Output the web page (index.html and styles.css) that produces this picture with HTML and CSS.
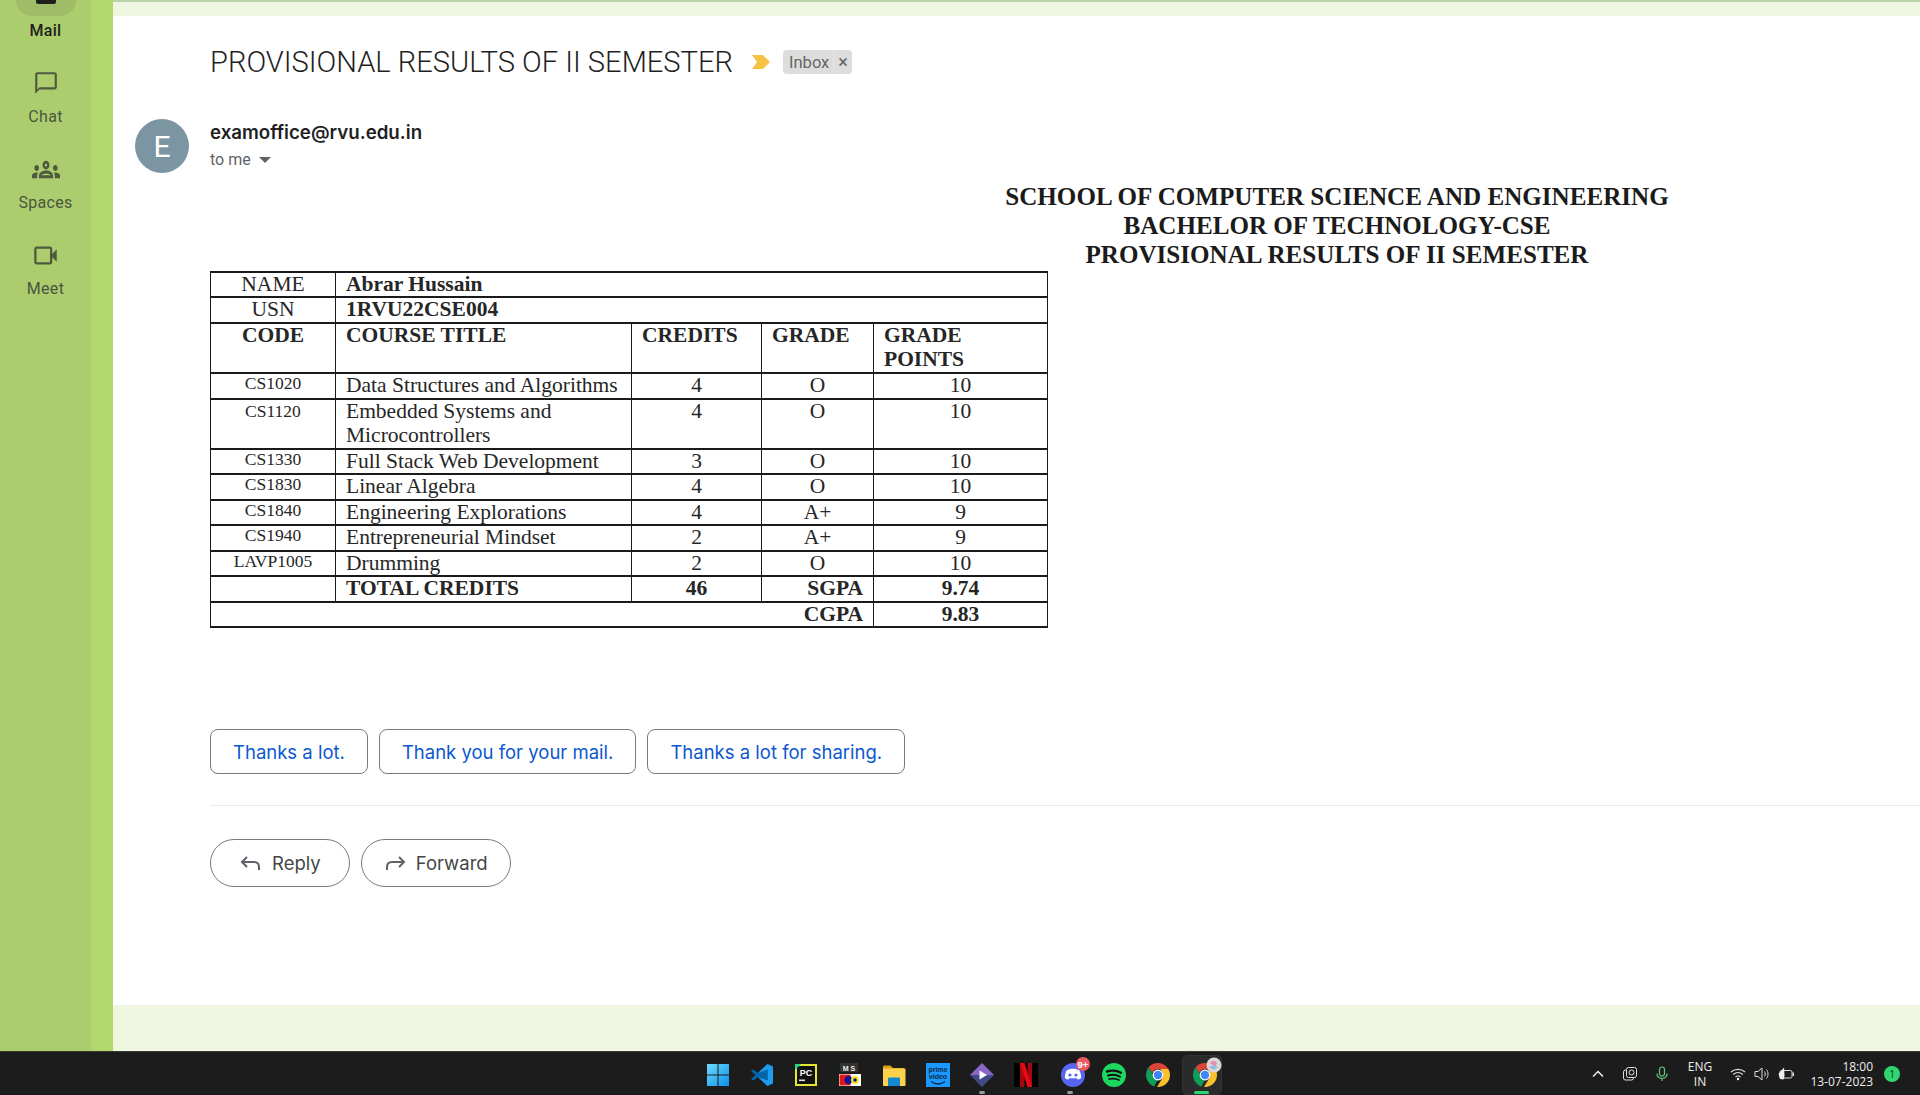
FILE: index.html
```html
<!DOCTYPE html>
<html lang="en">
<head>
<meta charset="utf-8">
<title>Gmail - Provisional results</title>
<link rel="stylesheet" href="styles.css">
</head>
<body>
<div class="screen">
  <div class="desktop">
    <nav class="rail">
      <div class="rail-item is-active">
        <div class="rail-icon"><svg viewBox="0 0 24 24" width="24" height="24"><path fill="#1f1f1f" d="M20 4H4c-1.1 0-2 .9-2 2v12c0 1.1.9 2 2 2h16c1.1 0 2-.9 2-2V6c0-1.1-.9-2-2-2z"/></svg></div>
        <div class="rail-label">Mail</div>
      </div>
      <div class="rail-item">
        <div class="rail-icon"><svg viewBox="0 0 24 24" width="26" height="26"><path fill="#4d5a3e" d="M20 2H4c-1.1 0-2 .9-2 2v18l4-4h14c1.1 0 2-.9 2-2V4c0-1.1-.9-2-2-2zm0 14H6l-2 2V4h16v12z"/></svg></div>
        <div class="rail-label">Chat</div>
      </div>
      <div class="rail-item">
        <div class="rail-icon"><svg viewBox="0 5.500 24 13" width="28" height="19" preserveAspectRatio="none"><path fill="#4d5a3e" d="M4 13c1.1 0 2-.9 2-2s-.9-2-2-2-2 .9-2 2 .9 2 2 2zm1.13 1.1c-.37-.06-.74-.1-1.13-.1-.99 0-1.93.21-2.78.58C.48 14.9 0 15.62 0 16.43V18h4.5v-1.61c0-.83.23-1.61.63-2.29zM20 13c1.1 0 2-.9 2-2s-.9-2-2-2-2 .9-2 2 .9 2 2 2zm4 3.43c0-.81-.48-1.53-1.22-1.85-.85-.37-1.79-.58-2.78-.58-.39 0-.76.04-1.13.1.4.68.63 1.46.63 2.29V18H24v-1.57zm-7.76-2.78c-1.17-.52-2.61-.9-4.24-.9-1.63 0-3.07.39-4.24.9C6.68 14.13 6 15.21 6 16.39V18h12v-1.61c0-1.18-.68-2.26-1.76-2.74zM8.07 16c.09-.23.13-.39.91-.69.97-.38 1.99-.56 3.02-.56s2.05.18 3.02.56c.77.3.81.46.91.69H8.07zM12 8c.55 0 1 .45 1 1s-.45 1-1 1-1-.45-1-1 .45-1 1-1m0-2c-1.66 0-3 1.34-3 3s1.34 3 3 3 3-1.34 3-3-1.34-3-3-3z"/></svg></div>
        <div class="rail-label">Spaces</div>
      </div>
      <div class="rail-item">
        <div class="rail-icon"><svg viewBox="0 0 24 24" width="27" height="27"><path fill="#4d5a3e" d="M18 10.48V6c0-1.1-.9-2-2-2H4c-1.1 0-2 .9-2 2v12c0 1.1.9 2 2 2h12c1.1 0 2-.9 2-2v-4.48l4 3.98v-11l-4 3.98zm-2-.79V18H4V6h12v3.69z"/></svg></div>
        <div class="rail-label">Meet</div>
      </div>
    </nav>
    <div class="gutter"></div>
    <div class="content">
      <div class="band-top"></div>
      <main class="mail">
        <div class="subject">
          <h1 class="subject-title">PROVISIONAL RESULTS OF II SEMESTER</h1>
          <svg class="marker" viewBox="0 0 18 14" width="18" height="14"><path fill="#f6c344" d="M0 0h11l7 7-7 7H0l5-7z"/></svg>
          <span class="chip"><span class="chip-text">Inbox</span><span class="chip-close">×</span></span>
        </div>
        <div class="sender">
          <div class="avatar">E</div>
          <div class="sender-meta">
            <div class="sender-addr">examoffice@rvu.edu.in</div>
            <div class="sender-to">to me <span class="caret"></span></div>
          </div>
        </div>
        <div class="letterhead">
          <div>SCHOOL OF COMPUTER SCIENCE AND ENGINEERING</div>
          <div>BACHELOR OF TECHNOLOGY-CSE</div>
          <div>PROVISIONAL RESULTS OF II SEMESTER</div>
        </div>
        <table class="results">
          <colgroup>
            <col class="c-code"><col class="c-title"><col class="c-credits"><col class="c-grade"><col class="c-points">
          </colgroup>
          <tr><td class="ctr">NAME</td><td colspan="4" class="b">Abrar Hussain</td></tr>
          <tr class="r26"><td class="ctr">USN</td><td colspan="4" class="b">1RVU22CSE004</td></tr>
          <tr class="wide"><td class="ctr b">CODE</td><td class="b">COURSE TITLE</td><td class="b">CREDITS</td><td class="b">GRADE</td><td class="b">GRADE POINTS</td></tr>
          <tr class="r26"><td class="ctr code">CS1020</td><td>Data Structures and Algorithms</td><td class="ctr">4</td><td class="ctr">O</td><td class="ctr">10</td></tr>
          <tr class="wide"><td class="ctr code">CS1120</td><td>Embedded Systems and Microcontrollers</td><td class="ctr">4</td><td class="ctr">O</td><td class="ctr">10</td></tr>
          <tr><td class="ctr code">CS1330</td><td>Full Stack Web Development</td><td class="ctr">3</td><td class="ctr">O</td><td class="ctr">10</td></tr>
          <tr class="r26"><td class="ctr code">CS1830</td><td>Linear Algebra</td><td class="ctr">4</td><td class="ctr">O</td><td class="ctr">10</td></tr>
          <tr><td class="ctr code">CS1840</td><td>Engineering Explorations</td><td class="ctr">4</td><td class="ctr">A+</td><td class="ctr">9</td></tr>
          <tr class="r26"><td class="ctr code">CS1940</td><td>Entrepreneurial Mindset</td><td class="ctr">2</td><td class="ctr">A+</td><td class="ctr">9</td></tr>
          <tr><td class="ctr code">LAVP1005</td><td>Drumming</td><td class="ctr">2</td><td class="ctr">O</td><td class="ctr">10</td></tr>
          <tr class="r26"><td></td><td class="b">TOTAL CREDITS</td><td class="ctr b">46</td><td class="end b">SGPA</td><td class="ctr b">9.74</td></tr>
          <tr><td colspan="4" class="end b">CGPA</td><td class="ctr b">9.83</td></tr>
        </table>
        <div class="smart-replies">
          <button class="smart">Thanks a lot.</button>
          <button class="smart">Thank you for your mail.</button>
          <button class="smart">Thanks a lot for sharing.</button>
        </div>
        <div class="divider"></div>
        <div class="actions">
          <button class="action action-reply"><svg viewBox="0 0 24 24" width="24" height="24"><path fill="none" stroke="#5f6368" stroke-width="2" d="M8 6 3 11l5 5M3 11h12c3 0 5 2 5 5v3"/></svg>Reply</button>
          <button class="action action-forward"><svg viewBox="0 0 24 24" width="24" height="24"><path fill="none" stroke="#5f6368" stroke-width="2" d="m16 6 5 5-5 5M21 11H9c-3 0-5 2-5 5v3"/></svg>Forward</button>
        </div>
      </main>
      <div class="band-bottom"></div>
    </div>
  </div>
  <footer class="taskbar">
    <div></div>
    <div class="apps">
      <div class="app"><svg viewBox="0 0 24 24" width="24" height="24"><defs><linearGradient id="w" x1="0" y1="0" x2="1" y2="1"><stop offset="0" stop-color="#6fdcff"/><stop offset="1" stop-color="#0a8fe8"/></linearGradient></defs><path fill="url(#w)" d="M1 1h10.500v10.500H1zM12.500 1H23v10.500H12.500zM1 12.500h10.500V23H1zM12.500 12.500H23V23H12.500z"/></svg></div>
      <div class="app"><svg viewBox="0 0 24 24" width="24" height="24"><path fill="#0065a9" d="M17.500 1 8 10 3.500 6.500 1 8l4.500 4L1 16l2.500 1.500L8 14l9.500 9V1z"/><path fill="#1f9cf0" d="M17.500 1 23 3.500v17L17.500 23 8 14l9.500 3.500v-11L8 10z"/></svg></div>
      <div class="app"><svg viewBox="0 0 24 24" width="24" height="24"><rect x="1" y="1" width="22" height="22" fill="#e8e337"/><rect x="3" y="3" width="18" height="18" fill="#111"/><path fill="#21d789" d="M1 1h6l-6 6z"/><text x="12" y="13" class="ic-pc">PC</text><rect x="5" y="16.500" width="6" height="1.600" fill="#ddd"/></svg></div>
      <div class="app"><svg viewBox="0 0 24 24" width="24" height="24"><rect x="2" y="0" width="18" height="9" fill="#333"/><text x="11" y="8" class="ic-ms">M S</text><rect x="1" y="11" width="22" height="12" fill="#fff"/><rect x="1.500" y="11.500" width="11" height="11" fill="#e0161c"/><circle cx="10.500" cy="17" r="4" fill="#141496"/><circle cx="17" cy="17" r="4" fill="#f4ea1d"/><circle cx="17" cy="17" r="1.800" fill="#141496"/></svg></div>
      <div class="app"><svg viewBox="0 0 24 24" width="24" height="24"><path fill="#d9a013" d="M1 4c0-1 .6-1.500 1.500-1.500h6L11 5h11v3H1z"/><path fill="#fbd24c" d="M1 5.500h21.500c.6 0 1 .4 1 1V22c0 .6-.4 1-1 1H2c-.6 0-1-.4-1-1z"/><path fill="#1487cf" d="M6 16c0-.8.5-1.500 1.500-1.500h9c1 0 1.500.7 1.500 1.500v7H6z"/></svg></div>
      <div class="app"><svg viewBox="0 0 24 24" width="24" height="24"><rect width="24" height="24" fill="#1a98ff"/><text x="12" y="8.500" class="ic-prime">prime</text><text x="12" y="15.500" class="ic-prime">video</text><path fill="none" stroke="#0d2a44" stroke-width="1.300" d="M5 18.500c4.500 3 10 3 14 0"/></svg></div>
      <div class="app has-dot"><svg viewBox="0 0 24 24" width="24" height="24"><path fill="#8a66c6" d="M12 0 24 12H0z"/><path fill="#3f4a86" d="M0 12h24L12 24z"/><path fill="#fff" d="M9.500 7.500 17 12l-7.500 4.500z"/></svg></div>
      <div class="app"><svg viewBox="0 0 24 24" width="24" height="24"><rect width="24" height="24" fill="#000"/><path fill="#a50710" d="M6 0h4.500v24H6zM13.500 0H18v24h-4.500z"/><path fill="#e50914" d="M6 0h4.500L18 24h-4.500z"/></svg></div>
      <div class="app has-dot"><svg class="ic-over" viewBox="0 0 30 30" width="30" height="30"><circle cx="12" cy="18" r="12" fill="#5865f2"/><path fill="#fff" d="M5.500 13.500c4-2.200 9-2.200 13 0 1.200 2.500 1.800 5 1.700 7.500-1 .9-2.200 1.400-3.300 1.700l-1-1.500H8.100l-1 1.500C6 22.400 4.800 21.900 3.800 21c0-2.500.6-5 1.700-7.500z"/><circle cx="9" cy="18" r="1.600" fill="#5865f2"/><circle cx="15" cy="18" r="1.600" fill="#5865f2"/><circle cx="22" cy="7" r="7" fill="#ec5a5f"/><text x="22" y="10.500" class="ic-badge">9+</text></svg></div>
      <div class="app"><svg viewBox="0 0 24 24" width="24" height="24"><circle cx="12" cy="12" r="12" fill="#1ed760"/><path fill="none" stroke="#111" stroke-linecap="round" stroke-width="2.400" d="M5 8.500c4.500-1.300 10-1 14 1.200"/><path fill="none" stroke="#111" stroke-linecap="round" stroke-width="2" d="M6 12.500c4-1 8.500-.8 12 1.200"/><path fill="none" stroke="#111" stroke-linecap="round" stroke-width="1.700" d="M7 16c3.500-.8 7-.6 10 1"/></svg></div>
      <div class="app"><svg viewBox="0 0 24 24" width="24" height="24"><path fill="#db4437" d="M12 0c4.400 0 8.300 2.400 10.400 6H12c-2.700 0-5 1.700-5.700 4.200L2.600 4.200C4.800 1.600 8.200 0 12 0z"/><path fill="#0f9d58" d="M2.600 4.200 7.800 13.200c1 1.700 2.700 2.800 4.200 2.800l-3.700 7.400C3.500 21.800 0 17.300 0 12c0-2.900 1-5.700 2.600-7.800z"/><path fill="#fbc02d" d="M22.400 6C23.400 7.800 24 9.800 24 12c0 6.600-5.400 12-12 12h-1l5.300-8.800c.5-.9.700-2 .7-3.200 0-2.300-1-4.400-3-6z"/><circle cx="12" cy="12" r="5.400" fill="#fff"/><circle cx="12" cy="12" r="4.200" fill="#4285f4"/></svg></div>
      <div class="app is-running"><svg class="ic-over" viewBox="0 0 30 30" width="30" height="30"><g transform="translate(0 6)"><path fill="#db4437" d="M12 0c4.400 0 8.300 2.400 10.400 6H12c-2.700 0-5 1.700-5.700 4.200L2.600 4.200C4.800 1.600 8.200 0 12 0z"/><path fill="#0f9d58" d="M2.600 4.200 7.800 13.200c1 1.700 2.700 2.800 4.200 2.800l-3.700 7.400C3.500 21.800 0 17.300 0 12c0-2.900 1-5.700 2.600-7.800z"/><path fill="#fbc02d" d="M22.400 6C23.400 7.800 24 9.800 24 12c0 6.600-5.400 12-12 12h-1l5.300-8.800c.5-.9.700-2 .7-3.200 0-2.300-1-4.400-3-6z"/><circle cx="12" cy="12" r="5.400" fill="#fff"/><circle cx="12" cy="12" r="4.200" fill="#4285f4"/></g><circle cx="21" cy="8" r="7.500" fill="#d9d9d9"/><path fill="#e88fb0" d="M17 6c2-3 5-3 7 0l-2 4z"/><path fill="#8fbfe0" d="M16 10c2-2 6-2 9 0l-4 3z"/></svg></div>
    </div>
    <div class="tray">
      <svg class="tray-ic" viewBox="0 0 16 16" width="16" height="16"><path fill="none" stroke="#eee" stroke-width="1.500" d="m3 10.500 5-5 5 5"/></svg>
      <svg class="tray-ic" viewBox="0 0 16 16" width="16" height="16"><rect x="1.500" y="4" width="10" height="10" rx="2" fill="none" stroke="#ddd"/><rect x="4.500" y="1.500" width="10" height="10" rx="2" fill="#1c1c1c" stroke="#ddd"/><circle cx="9.500" cy="6.500" r="2.500" fill="none" stroke="#ddd"/></svg>
      <svg class="tray-ic" viewBox="0 0 16 16" width="16" height="16"><rect x="5.500" y="1" width="5" height="9" rx="2.500" fill="none" stroke="#5fc87a" stroke-width="1.200"/><path fill="none" stroke="#5fc87a" stroke-width="1.200" d="M3 7.500c0 3 2 4.800 5 4.800s5-1.800 5-4.800M8 12.300V15"/></svg>
      <div class="lang"><div>ENG</div><div>IN</div></div>
      <svg class="tray-ic tight" viewBox="0 0 16 16" width="16" height="16"><path fill="none" stroke="#ddd" stroke-width="1.100" d="M1 6c4-3.500 10-3.500 14 0M3.200 8.500c3-2.500 6.600-2.500 9.600 0M5.500 11c1.500-1.200 3.500-1.200 5 0"/><circle cx="8" cy="13" r="1.200" fill="#fff"/></svg>
      <svg class="tray-ic tight" viewBox="0 0 16 16" width="16" height="16"><path fill="none" stroke="#ddd" stroke-width="1" d="M1 5.500h3L8 2v12L4 10.500H1zM10.500 5.500c1 1.500 1 3.500 0 5M12.500 3.500c2 2.500 2 6.500 0 9"/></svg>
      <svg class="tray-ic batt" viewBox="0 0 18 16" width="18" height="16"><rect x="3" y="4.500" width="12" height="7.500" rx="1.500" fill="none" stroke="#ddd"/><rect x="15.500" y="6.500" width="1.500" height="3.500" fill="#ddd"/><path fill="#eee" d="M7 1.500 1.500 8 3 13l3.500.5 1-4z"/></svg>
      <div class="clock"><div>18:00</div><div>13-07-2023</div></div>
      <div class="notify">1</div>
    </div>
  </footer>
</div>
</body>
</html>
```

FILE: styles.css
```css
* { box-sizing: border-box; }
html, body { margin: 0; height: 100%; }
body { font-family: "Roboto", "Liberation Sans", sans-serif; background: #fff; overflow: hidden; }
button { font: inherit; background: #fff; cursor: pointer; }

.screen { display: flex; flex-direction: column; width: 1920px; height: 1095px; overflow: hidden; }
.desktop { flex: 1; display: flex; min-height: 0; }

/* left rail */
.rail { width: 91px; flex: none; background: #accd6e; overflow: hidden; display: flex; flex-direction: column; align-items: center; }
.rail-item { flex: none; height: 86px; padding-top: 5px; display: flex; flex-direction: column; align-items: center; }
.rail-item:first-child { margin-top: -20px; padding-top: 4px; }
.rail-icon { width: 60px; height: 24px; display: flex; align-items: center; justify-content: center; border-radius: 16px; }
.is-active .rail-icon { height: 40px; margin-top: -8px; margin-bottom: -7px; background: #9fbc66; }
.rail-label { margin-top: 10px; font-size: 16px; line-height: 24px; letter-spacing: .3px; color: #4a5540; }
.is-active .rail-label { color: #1f1f1f; font-weight: 500; }
.gutter { width: 22px; flex: none; background: #b0d86c; }

.content { flex: 1; display: flex; flex-direction: column; min-width: 0; }
.band-top { height: 16px; flex: none; background: #eef6df; border-top: 2px solid #b9d4a8; }
.band-bottom { height: 46px; flex: none; background: #eef6df; }

/* message */
.mail { flex: 1; background: #fff; padding: 26px 0 0 22px; min-height: 0; overflow: hidden; }
.subject { display: flex; align-items: center; height: 40px; margin-left: 75px; }
.subject-title { margin: 0; font-size: 29.1px; font-weight: 300; color: #1f1f1f; white-space: nowrap; }
.marker { margin-left: 19px; }
.chip { display: flex; align-items: center; height: 24px; margin-left: 13px; background: #ddd; border-radius: 4px; color: #666; font-size: 16.5px; }
.chip-text { padding: 1px 4px 0 6px; border-right: 1px solid #e6e6e6; line-height: 23px; }
.chip-close { padding: 0 4px; font-size: 18px; line-height: 24px; }

.sender { display: flex; margin-top: 37px; height: 54px; }
.avatar { width: 54px; height: 54px; border-radius: 50%; background: #7c95a3; color: #fff; font-size: 30px; display: flex; align-items: center; justify-content: center; }
.sender-meta { margin-left: 21px; }
.sender-addr { font: 600 18.7px/28px "Inter", sans-serif; color: #1f1f1f; }
.sender-to { font-size: 16px; color: #5f6368; line-height: 26px; display: flex; align-items: center; gap: 8px; }
.caret { width: 0; height: 0; border: 6px solid transparent; border-top-color: #5f6368; border-bottom: 0; }

.letterhead { width: 1000px; margin: 9px 0 0 702px; text-align: center; font: bold 25.1px/29px "Liberation Serif", serif; color: #1b1b1b; }

/* results table */
.results { margin: 2px 0 0 75px; width: 837px; table-layout: fixed; border-collapse: collapse; font: 21.5px/23px "Liberation Serif", serif; color: #262626; }
.c-code { width: 125px; } .c-title { width: 296px; } .c-credits { width: 130px; } .c-grade { width: 112px; } .c-points { width: 174px; }
.results tr { height: 25px; }
.results tr.r26 { height: 26px; }
.results tr.wide { height: 50px; }
.results .wide td { line-height: 23.5px; }
.results td { border-style: solid; border-color: #1a1a1a; border-width: 2px 1px; padding: 0 10px; vertical-align: top; overflow: hidden; }
.results .b { font-weight: bold; }
.results .ctr { text-align: center; }
.results .end { text-align: right; }
.results .code { font-size: 17.5px; line-height: 19px; padding: 0; }

/* replies */
.smart-replies { display: flex; gap: 11px; margin: 101px 0 0 75px; }
.smart { height: 45px; padding: 0 22px; border: 1px solid #7a7a7a; border-radius: 8px; color: #0b57d0; font: 18.5px "Inter", sans-serif; }
.divider { height: 1px; background: #eaeaea; margin: 31px 0 0 75px; }
.actions { display: flex; gap: 11px; margin: 33px 0 0 75px; }
.action { height: 48px; border: 1px solid #7a7a7a; border-radius: 24px; color: #444746; font: 18.5px "Inter", sans-serif; display: flex; align-items: center; gap: 9px; }
.action-reply { padding: 0 28px; }
.action-forward { padding: 0 22px 0 21px; }

/* taskbar */
.taskbar { height: 44px; flex: none; background: #1c1c1c; border-top: 1px solid #3a3a34; display: grid; grid-template-columns: 696px 528px 1fr; color: #eee; }
.apps { display: flex; }
.app { position: relative; width: 44px; height: 43px; display: flex; align-items: center; justify-content: center; padding-top: 3px; }
.ic-over { margin: -6px -6px 0 0; flex: none; transform: translate(3px, 0); }
.has-dot::after { content: ""; position: absolute; left: 19px; bottom: 1px; width: 6px; height: 3px; border-radius: 2px; background: #9a9a9a; }
.is-running::before { content: ""; position: absolute; inset: 3px 2px 0; background: #2b2b2b; border: 1px solid #333; border-radius: 5px; }
.is-running svg { position: relative; }
.is-running::after { content: ""; position: absolute; left: 14px; bottom: 1px; width: 15px; height: 3px; border-radius: 2px; background: #2ed573; }
.ic-pc { font: bold 9px "Liberation Sans", sans-serif; fill: #fff; text-anchor: middle; }
.ic-ms { font: bold 7px "Liberation Sans", sans-serif; fill: #eee; text-anchor: middle; }
.ic-prime { font: bold 7px "Liberation Sans", sans-serif; fill: #0d2a44; text-anchor: middle; }
.ic-badge { font: bold 9.500px "Liberation Sans", sans-serif; fill: #fff; text-anchor: middle; }

.tray { display: flex; align-items: center; padding-left: 366px; }
.tray > * { flex: none; }
.tray-ic { margin-right: 16px; }
.tray-ic.tight { margin-right: 8px; }
.tray-ic.batt { margin: 0 0 0 -1px; }
.lang { width: 38px; margin: 0 11px 0 -5px; text-align: center; font: 12px/15px "Open Sans", sans-serif; }
.clock { width: 76px; text-align: right; font: 12px/15px "Open Sans", sans-serif; margin-left: 2px; }
.notify { width: 16px; height: 16px; margin-left: 11px; border-radius: 50%; background: #2fd66f; color: #0c3a1e; font: 10px/16px "Open Sans", sans-serif; text-align: center; }
```
